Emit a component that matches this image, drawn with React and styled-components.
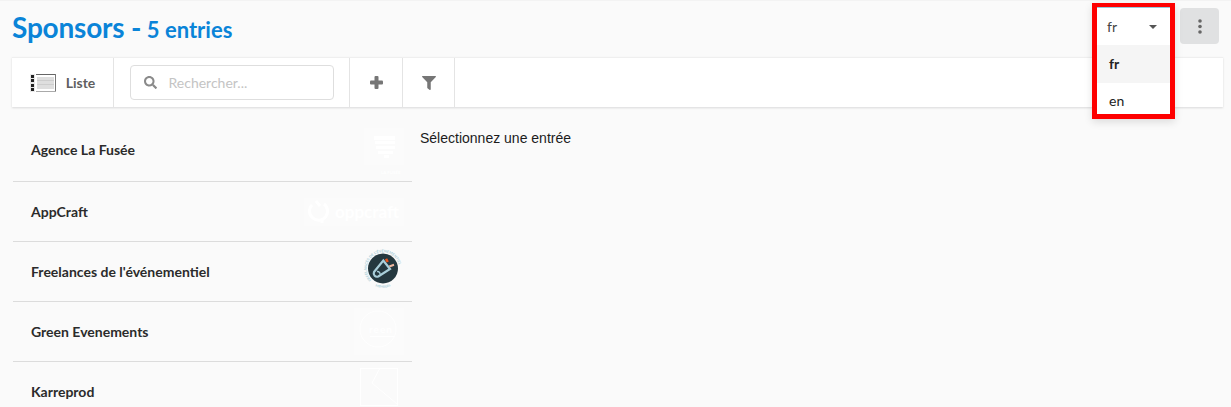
import React from "react";
import styled, { createGlobalStyle } from "styled-components";
import { FaSearch, FaFilter } from "react-icons/fa";

const Global = createGlobalStyle`
  html, body { margin: 0; padding: 0; background: #fafafa; height: 407px; overflow: hidden; }
  * { box-sizing: border-box; }
`;
const Page = styled.div`
  position: relative; width: 1231px; height: 407px; overflow: hidden;
  padding: 0 8px 0 12px; background: #fafafa; font-family: Lato, sans-serif; border-top: 1px solid #f3f3f3;
`;
const Header = styled.div`
  height: 56px; display: flex; align-items: center; justify-content: space-between; padding-right: 4px;
`;
const Title = styled.h1`
  margin: 0 0 1px; font-size: 28px; font-weight: 700; color: #0a84d8; line-height: 32px; letter-spacing: -0.2px;
  small { font-size: 22px; font-weight: 700; letter-spacing: 0; margin-left: -1px; }
`;
const HeaderRight = styled.div`
  display: flex; align-items: flex-start; align-self: flex-start; padding-top: 7px;
`;
const MoreButton = styled.button`
  width: 39px; height: 36px; border: 0; border-radius: 4px; background: #e0e1e2; display: flex;
  align-items: center; justify-content: center; padding: 0;
`;
const Toolbar = styled.div`
  height: 50px; width: 1211px; background: #fff; display: flex; box-shadow: 0 1px 2px rgba(34,36,38,.15); border-top: 1px solid #efefef;
`;
const Cell = styled.div`
  display: flex; align-items: center; justify-content: center; width: ${p => p.$w}px; border-right: 1px solid #e4e4e4;
  color: #767676; gap: 10px;
`;
const ListLabel = styled.span`
  font-size: 14px; font-weight: 700; color: #5f5f5f;
`;
const Search = styled.div`
  width: 204px; height: 35px; border: 1px solid #dedede; border-radius: 4px; display: flex; align-items: center;
  padding-left: 13px; gap: 12px; color: #8a8a8a;
`;
const Placeholder = styled.span`
  font-size: 14px; color: #c4c4c4;
`;
const Body = styled.div`
  display: flex; padding-top: 14px; padding-left: 1px;
`;
const List = styled.div`
  width: 399px; flex: none;
`;
const Row = styled.div`
  height: 60px; display: flex; align-items: center; justify-content: space-between; padding: 0 8px 0 18px;
  border-bottom: 1px solid #dcdcdc; font-size: 14px; font-weight: 700; color: #2b2b2b;
  &:first-child { height: 61px; padding-bottom: 3px; }
  &:last-child { border-bottom: 0; padding-bottom: 2px; }
`;
const Logo = styled.svg`
  flex: none; display: block; margin-right: ${p => p.$inset || 0}px; margin-bottom: ${p => p.$lift || 0}px;
`;
const Empty = styled.div`
  margin: 0 0 0 8px; padding-top: 9px; font: 14px "Liberation Sans", Arial, sans-serif; color: #1c1c1c;
`;
const Highlight = styled.div`
  position: absolute; left: 1092px; top: 2px; width: 83px; height: 116px; border: 5px solid #fe0000; border-top-width: 4px;
  background: #fff; box-shadow: 0 3px 8px rgba(0,0,0,.12); display: flex; flex-direction: column; overflow: hidden;
`;
const Current = styled.div`
  height: 38px; flex: none; padding: 0 13px 0 10px; display: flex; align-items: center; justify-content: space-between;
  font-size: 14px; color: #444; border-top: 1px solid #96c8da;
`;
const Caret = styled.i`
  width: 0; height: 0; border-left: 4px solid transparent; border-right: 4px solid transparent; border-top: 4px solid #555;
`;
const Option = styled.div`
  height: ${p => (p.$active ? 38 : 36)}px; flex: none; padding: 0 0 2px 12px; display: flex; align-items: center; font-size: 14px;
  color: #222; font-weight: ${p => (p.$active ? 700 : 400)}; background: ${p => (p.$active ? "#f5f5f5" : "#fff")};
`;

const ListIcon = () => (
  <Logo width="26" height="18" viewBox="0 0 26 18">
    <rect width="26" height="18" fill="#fff" />
    <rect x="6" y="0" width="20" height="1" fill="#666" />
    <rect x="25" y="0" width="1" height="18" fill="#777" />
    <rect x="6" y="17" width="20" height="1" fill="#aaa" />
    <rect x="0" y="0" width="5" height="18" fill="#e8e8e8" />
    {[1, 5, 10, 14].map(y => <rect key={y} x="1" y={y} width="3" height="3" fill="#222" />)}
    <rect x="7" y="3" width="17" height="12" fill="#dedede" />
    <rect x="7" y="6" width="17" height="1" fill="#cdcdcd" />
    <rect x="7" y="10" width="17" height="1" fill="#cdcdcd" />
  </Logo>
);
const PlusIcon = () => (
  <svg width="13" height="13" viewBox="0 0 13 13" fill="#767676">
    <rect x="4.5" y="0" width="4" height="13" rx="1" />
    <rect x="0" y="4.5" width="13" height="4" rx="1" />
  </svg>
);
const Fusee = () => (
  <Logo $lift={-2} width="40" height="50" viewBox="0 0 40 50">
    <rect y="2" width="40" height="37" fill="#fbfbfb" />
    <rect x="10" y="10" width="21" height="4" fill="#fff" />
    <rect x="11" y="15" width="20" height="3" fill="#fff" />
    <rect x="12" y="20" width="19" height="3" fill="#fff" />
    <rect x="14" y="25" width="15" height="3" fill="#fff" />
    <rect x="20" y="29" width="5" height="3" fill="#fff" />
    <text x="17" y="48" fill="#fff" fontSize="4.4" fontWeight="700" fontFamily="Lato, sans-serif">LA FUSÉE</text>
  </Logo>
);
const AppCraftLogo = () => (
  <Logo width="100" height="28" viewBox="0 0 100 28">
    <rect width="100" height="28" fill="#fbfbfb" />
    <path d="M8 7a9 9 0 1 0 12 -1M12 3l4 5M18 22v3" fill="none" stroke="#fff" strokeWidth="3" />
    <text x="31" y="20" fill="#fff" fontSize="17" fontFamily="Lato, sans-serif">oppcraft</text>
  </Logo>
);
const Freelances = () => (
  <Logo width="42" height="48" viewBox="0 0 42 48">
    <defs>
      <path id="ringTop" d="M9.5 32A16.2 16.2 0 1 1 32.5 32" />
      <path id="ringBottom" d="M12 37.5A19 19 0 0 0 30 37.5" />
    </defs>
    <text fill="#a8cdd8" fontSize="3.7" fontWeight="700" fontFamily="Lato, sans-serif">
      <textPath href="#ringTop">FREELANCES DE L'ÉVÉNEMENTIEL</textPath>
    </text>
    <text fill="#a8cdd8" fontSize="3.2" fontWeight="700" fontFamily="Lato, sans-serif" textAnchor="middle">
      <textPath href="#ringBottom" startOffset="50%">MEMBERS</textPath>
    </text>
    <circle cx="21" cy="20.5" r="15" fill="#25383f" />
    <path d="M12 24L21.3 12.5L28 21L16.3 28.5C13.5 29.5 10.8 27 12 24Z" fill="none" stroke="#a9ced9" strokeWidth="2.2" />
    <path d="M15 23.5a2.5 2.5 0 0 1 3 3" fill="none" stroke="#a9ced9" strokeWidth="1.4" />
    <path d="M24 10.8L25.7 14" stroke="#e8541e" strokeWidth="2.6" />
    <path d="M27.3 18.5L32 16.8" stroke="#efb8a0" strokeWidth="2" />
  </Logo>
);
const Green = () => (
  <Logo width="50" height="47" viewBox="0 0 50 47">
    <rect width="50" height="47" fill="#fbfbfb" />
    <circle cx="24" cy="21" r="18" fill="none" stroke="#fff" strokeWidth="1" />
    <text x="15" y="25" fill="#fff" fontSize="10" fontFamily="Lato, sans-serif" letterSpacing="1">reen</text>
    <rect x="16" y="28" width="24" height="1" fill="#fff" />
  </Logo>
);
const Karre = () => (
  <Logo $inset={6} $lift={8} width="38" height="38" viewBox="0 0 38 38">
    <rect x=".5" y=".5" width="37" height="37" fill="none" stroke="#fff" strokeWidth="1" />
    <path d="M20 0L12 15L37 36" fill="none" stroke="#fff" strokeWidth="1" />
  </Logo>
);

const rows = [
  ["Agence La Fusée", <Fusee />],
  ["AppCraft", <AppCraftLogo />],
  ["Freelances de l'événementiel", <Freelances />],
  ["Green Evenements", <Green />],
  ["Karreprod", <Karre />],
];

export default function App() {
  return (
    <Page>
      <Global />
      <Header>
        <Title>Sponsors - <small>5 entries</small></Title>
        <HeaderRight>
          <MoreButton aria-label="Plus">
            <svg width="4" height="15" viewBox="0 0 4 15" fill="#666">
              <circle cx="2" cy="2" r="1.8" /><circle cx="2" cy="7.5" r="1.8" /><circle cx="2" cy="13" r="1.8" />
            </svg>
          </MoreButton>
        </HeaderRight>
      </Header>
      <Toolbar>
        <Cell $w={102}><ListIcon /><ListLabel>Liste</ListLabel></Cell>
        <Cell $w={236}>
          <Search><FaSearch size={13} /><Placeholder>Rechercher...</Placeholder></Search>
        </Cell>
        <Cell $w={53}><PlusIcon /></Cell>
        <Cell $w={52}><FaFilter size={14} /></Cell>
      </Toolbar>
      <Body>
        <List>
          {rows.map(([name, logo]) => (
            <Row key={name}><span>{name}</span>{logo}</Row>
          ))}
        </List>
        <Empty>Sélectionnez une entrée</Empty>
      </Body>
      <Highlight>
        <Current>fr<Caret /></Current>
        <Option $active>fr</Option>
        <Option>en</Option>
      </Highlight>
    </Page>
  );
}
